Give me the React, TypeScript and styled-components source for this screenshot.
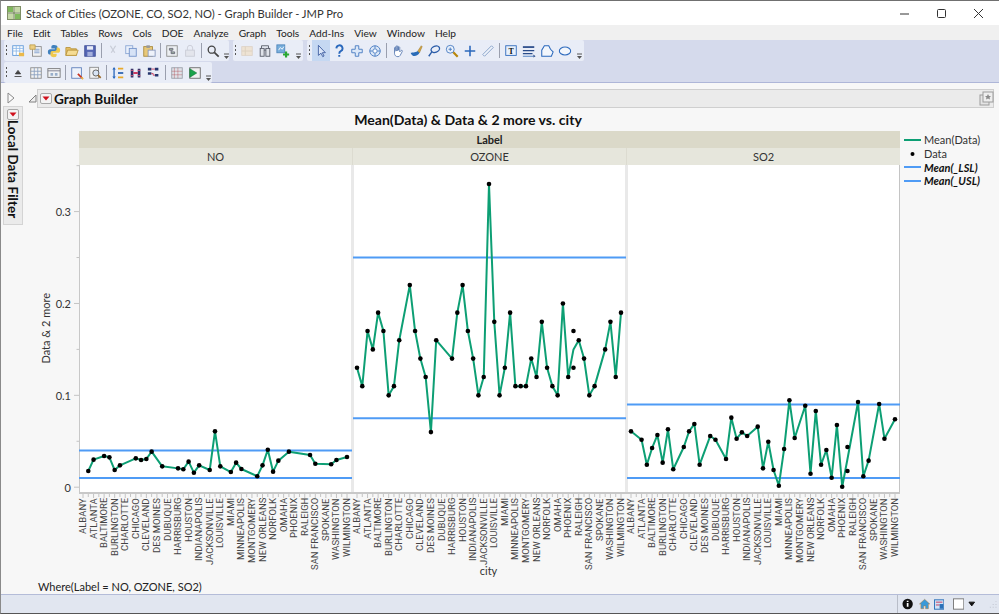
import React from 'react';
import styled, { createGlobalStyle } from 'styled-components';

const FONT = `Lato, 'Open Sans', sans-serif`;

const GlobalStyle = createGlobalStyle`
  html, body { margin: 0; padding: 0; background: #f7f7f7; overflow: hidden; }
  * { box-sizing: border-box; }
`;

const CITIES = ['ALBANY', 'ATLANTA', 'BALTIMORE', 'BURLINGTON', 'CHARLOTTE', 'CHICAGO', 'CLEVELAND', 'DES MOINES', 'DUBUQUE', 'HARRISBURG', 'HOUSTON', 'INDIANAPOLIS', 'JACKSONVILLE', 'LOUISVILLE', 'MIAMI', 'MINNEAPOLIS', 'MONTGOMERY', 'NEW ORLEANS', 'NORFOLK', 'OMAHA', 'PHOENIX', 'RALEIGH', 'SAN FRANCISCO', 'SPOKANE', 'WASHINGTON', 'WILMINGTON'];

type Val = number | number[] | null;
const _ = null;

const NO_DATA: Val[] = [_, .0176, .03, _, .034, .0325, .0187, .0238, _, _, .0314, .0296, .0307, .0387, _, .0227, _, _, .0205, .0195, .0278, .0158, .0238, _, .0187, .0608, .0227, _, .0165, .0267, .0198, _, _, .0119, .0238, .0408, .0169, .0289, _, .0387, _, _, _, .035, .0256, _, _, .0249, .0296, _, .0329];
const OZONE_DATA: Val[] = [.13, .11, .17, .15, .19, .17, .1, .11, .16, _, .22, .17, .14, .12, .06, .16, _, _, .14, .19, .22, .17, .14, .1, .12, .33, .18, .1, .13, .19, .11, .11, .11, .14, .12, .18, .13, .11, .1, .2, .12, [.17, .13], .16, .14, .1, .11, _, .15, .18, .12, .19];
const SO2_DATA: Val[] = [.0608, _, .0517, .0245, .0427, .0568, .0267, .063, .0195, _, .0438, .0608, .0688, .0245, _, .0557, .0517, _, .0307, .0757, .0528, .0597, .0557, _, .0659, .0205, .0495, .0187, .0016, .0416, .0946, .0536, _, .0887, .0147, .083, .0245, .0405, .0103, .0677, .0005, [.0176, .0438], _, .0927, .0119, .0289, _, .0906, .0528, _, .0739];

const PANELS = [
  { name: 'NO', data: NO_DATA, limits: [0.01, 0.04] },
  { name: 'OZONE', data: OZONE_DATA, limits: [0.075, 0.25] },
  { name: 'SO2', data: SO2_DATA, limits: [0.01, 0.09] },
];

const PLOT_W = 271;
const PLOT_H = 327;
const PITCH = 5.28;
const xAt = (i: number) => 3 + PITCH * i;
const yAt = (v: number) => 322.2 - 918.7 * v;

/* ---------- window chrome ---------- */

const Window = styled.div`
  width: 999px;
  height: 614px;
  display: flex;
  flex-direction: column;
  border-top: 1px solid #707070;
  border-left: 1px solid #8a8a8a;
  border-bottom: 1px solid #555;
  background: #f7f7f7;
  font-family: ${FONT};
  color: #222;
`;

const TitleBar = styled.div`
  height: 24px;
  flex: none;
  display: flex;
  align-items: center;
  padding-left: 6px;
  background: #fff;
`;

const TitleText = styled.span`
  margin-left: 5px;
  font-size: 11.2px;
  color: #333;
  flex: 1;
`;

const WinButtons = styled.div`
  display: flex;
  align-items: center;
  gap: 26px;
  padding-right: 15px;
`;

const MenuBar = styled.div`
  height: 15px;
  flex: none;
  display: flex;
  align-items: center;
  gap: 10px;
  padding-left: 6px;
  background: #f0f0f0;
  font-size: 10.2px;
  color: #222;
`;

const ToolArea = styled.div`
  height: 43px;
  flex: none;
  background: #d5daec;
  border-bottom: 1px solid #aeb6d8;
  display: flex;
  flex-direction: column;
  gap: 1px;
  padding: 0 0 0 3px;
`;

const ToolRow = styled.div`
  display: flex;
  gap: 4px;
  height: 21px;
`;

const ToolPill = styled.div<{ $width: number }>`
  width: ${p => p.$width}px;
  display: flex;
  align-items: center;
  height: 21px;
  background: #e9edf7;
  border-radius: 2px;
`;

const Grip = styled.div`
  width: 5px;
  height: 11px;
  flex: none;
  background: radial-gradient(circle at 2.5px 1px, #555 .9px, transparent 1px) 0 0 / 5px 4px;
`;

const ToolBtn = styled.div<{ $active?: boolean }>`
  width: 18px;
  height: 21px;
  flex: none;
  display: flex;
  align-items: center;
  justify-content: center;
  background: ${p => (p.$active ? '#c5d8f2' : 'transparent')};
`;

const ToolSep = styled.div`
  width: 1px;
  height: 15px;
  margin: 0 2px;
  flex: none;
  background: #9a9fae;
`;

const Chevron = styled.div`
  width: 8px;
  height: 20px;
  margin-left: auto;
  margin-right: 1px;
  flex: none;
  display: flex;
  align-items: flex-end;
  justify-content: center;
  padding-bottom: 1px;
`;

/* ---------- report body ---------- */

const Body = styled.div`
  flex: 1;
  display: flex;
  min-height: 0;
  border-bottom: 1px solid #b4bcd8;
`;

const Rail = styled.div`
  width: 27px;
  flex: none;
  display: flex;
  flex-direction: column;
  align-items: flex-start;
  padding: 9px 0 0 2px;
`;

const FilterTab = styled.div`
  margin-top: 2px;
  width: 20px;
  height: 119px;
  display: flex;
  flex-direction: column;
  align-items: center;
  gap: 0;
  padding-top: 2px;
  background: #ebebeb;
  border: 1px solid #d4d4d4;
`;

const FilterLabel = styled.span`
  writing-mode: vertical-rl;
  font-size: 13.3px;
  font-weight: 700;
  letter-spacing: 0.1px;
  color: #111;
`;

const Main = styled.div`
  flex: 1;
  display: flex;
  flex-direction: column;
  padding-top: 6px;
  min-width: 0;
`;

const OutlineRow = styled.div`
  display: flex;
  align-items: center;
  gap: 0;
  height: 19px;
  padding-right: 5px;
`;

const OutlineBar = styled.div`
  flex: 1;
  height: 19px;
  display: flex;
  align-items: center;
  gap: 2px;
  padding: 0 0 0 2px;
  background: #ebebeb;
  border: 1px solid #cfcfcf;
`;

const OutlineTitle = styled.span`
  flex: 1;
  font-size: 13.6px;
  font-weight: 700;
  color: #111;
`;

const ChartTitle = styled.div`
  height: 23px;
  width: 880px;
  text-align: center;
  font-size: 14.1px;
  font-weight: 700;
  line-height: 24px;
  color: #111;
`;

const ChartGrid = styled.div`
  display: grid;
  grid-template-columns: 24px 27px 821px 1fr;
  grid-template-rows: 17px 17px ${PLOT_H}px 6px 64px;
`;

const YTitle = styled.div`
  grid-column: 1;
  grid-row: 3;
  display: flex;
  align-items: center;
  justify-content: center;
  padding-left: 12px;
`;

const YTitleText = styled.span`
  writing-mode: vertical-rl;
  transform: rotate(180deg);
  font-size: 11px;
  white-space: nowrap;
  color: #333;
  margin-left: -1px;
`;

const YAxis = styled.svg`
  grid-column: 2;
  grid-row: 3;
  display: block;
  overflow: visible;
`;

const GroupStrip = styled.div`
  grid-column: 3;
  grid-row: 1;
  background: #dbd9c9;
  text-align: center;
  font-size: 11px;
  font-weight: 700;
  line-height: 17px;
  color: #222;
`;

const StripRow = styled.div`
  grid-column: 3;
  grid-row: 2;
  display: flex;
  gap: 1px;
  background: #dcdbd0;
`;

const Strip = styled.div`
  flex: 1;
  background: #e6e6dc;
  text-align: center;
  font-size: 11px;
  line-height: 17px;
  color: #333;
`;

const PlotRow = styled.div`
  grid-column: 3;
  grid-row: 3;
  display: flex;
  justify-content: space-between;
  background: #e9e9e9;
  border-left: 1px solid #c8c8c8;
  border-right: 1px solid #c4c4c4;
`;

const Plot = styled.svg`
  display: block;
  background: #fff;
  overflow: visible;
`;

const TickRow = styled.div`
  grid-column: 3;
  grid-row: 4;
  display: flex;
  justify-content: space-between;
  padding: 0 1px;
  border-top: 2px solid #c8c8c8;
`;

const LabelRow = styled.div`
  grid-column: 3;
  grid-row: 5;
  display: flex;
  justify-content: space-between;
  padding: 0 1px;
`;

const LabelPanel = styled.div`
  width: ${PLOT_W}px;
  display: flex;
`;

const CityLabel = styled.span`
  width: ${PITCH * 2}px;
  height: 64px;
  flex: none;
  writing-mode: vertical-rl;
  transform: rotate(180deg);
  display: flex;
  align-items: center;
  justify-content: flex-end;
  position: relative;
  left: -2.8px;
  font-family: Roboto, ${FONT};
  font-size: 9.5px;
  white-space: nowrap;
  color: #444;
`;

const Legend = styled.div`
  grid-column: 4;
  grid-row: 1 / 4;
  padding: 2px 0 0 4px;
  display: flex;
  flex-direction: column;
`;

const LegendRow = styled.div`
  height: 13.7px;
  display: flex;
  align-items: center;
  gap: 3px;
`;

const LegendText = styled.span<{ $limit?: boolean }>`
  font-size: 11px;
  color: ${p => (p.$limit ? '#111' : '#333')};
  font-weight: ${p => (p.$limit ? 700 : 400)};
  font-style: ${p => (p.$limit ? 'italic' : 'normal')};
`;

const XTitle = styled.div`
  height: 19px;
  margin-left: 50px;
  width: 821px;
  text-align: center;
  font-size: 11px;
  line-height: 18px;
  color: #333;
`;

const WhereLine = styled.div`
  height: 14px;
  padding-left: 10px;
  font-size: 11px;
  line-height: 13px;
  color: #222;
`;

const StatusBar = styled.div`
  height: 18px;
  flex: none;
  display: flex;
  justify-content: flex-end;
  align-items: center;
  background: #e1e6f0;
  padding-right: 2px;
`;

const StatusTools = styled.div`
  height: 18px;
  width: 100px;
  display: flex;
  align-items: center;
  gap: 3px;
  padding-left: 4px;
  border-left: 1px solid #b8bdc8;
`;

/* ---------- small drawings ---------- */

const Ico = ({ children, size = 14 }: { children: React.ReactNode; size?: number }) => (
  <svg width={size} height={size} viewBox="0 0 16 16">{children}</svg>
);

const RedMenu = () => (
  <svg width="12" height="11" viewBox="0 0 12 11" style={{ flex: 'none' }}>
    <rect x="0.5" y="0.5" width="11" height="10" rx="1.5" fill="#f4f4f4" stroke="#a8a8a8" />
    <path d="M2.5 3.5h7L6 7.5z" fill="#d0101c" />
  </svg>
);

const ICONS: Record<string, React.ReactNode> = {
  newTable: <><rect x="2" y="2" width="12" height="11" fill="#fff" stroke="#5a96d8" /><path d="M2 5h12M2 8h12M6 2v11M10 2v11" stroke="#8db8e8" /><path d="M9 10h6v4H9z" fill="#eab84a" /></>,
  script: <><rect x="4" y="3" width="10" height="11" fill="#f2f2f2" stroke="#8a8a8a" /><path d="M6 6h6M6 8h6M6 10h6" stroke="#7a9ccf" /><path d="M1 1h6v5H1z" fill="#ecce82" stroke="#c0a050" /></>,
  python: <><path d="M8 1C5 1 5 2.500 5 4v1h4v1H3.500C2 6 1 7 1 9s1 3 2.500 3H5v-2c0-1 1-2 2-2h3c1 0 2-.8 2-2V3.500C12 2 10.500 1 8 1z" fill="#3f80bd" /><path d="M8 15c3 0 3-1.500 3-3v-1H7v-1h5.500C14 10 15 9 15 7s-1-3-2.500-3H11v2c0 1-1 2-2 2H6c-1 0-2 .8-2 2v2.500C4 14 5.500 15 8 15z" fill="#f0c94c" /></>,
  folder: <><path d="M1 4h5l1 1.500h6V13H1z" fill="#e4be64" stroke="#b8953f" /><path d="M3 7h12l-2 6H1z" fill="#f5dc94" stroke="#b8953f" /></>,
  save: <><rect x="2" y="2" width="12" height="12" fill="#5566b4" stroke="#3d4c96" /><rect x="4.500" y="2.500" width="7" height="4" fill="#e8ecf8" /><rect x="5" y="9" width="6" height="5" fill="#a4afdc" /></>,
  cut: <path d="M5 2l5 8M11 2L6 10" stroke="#c9cdd8" strokeWidth="1.500" fill="none" />,
  copy: <><rect x="2" y="2" width="8" height="9" fill="#eaf0fb" stroke="#8aa6d4" /><rect x="6" y="5" width="8" height="9" fill="#d6e2f6" stroke="#7090c8" /></>,
  paste: <><rect x="2" y="3" width="10" height="11" fill="#e8c878" stroke="#a88a3e" /><rect x="5" y="1.500" width="4" height="3" fill="#999" /><rect x="7" y="7" width="8" height="7" fill="#eef2fa" stroke="#8596bc" /></>,
  jrn: <><rect x="2" y="2" width="12" height="12" fill="#eceff2" stroke="#8a8a8a" /><path d="M5 5h4v2H5zM7 9h4v2H7zM7 7v2" fill="#a8c0a8" stroke="#667" /></>,
  lock: <><rect x="3" y="7" width="10" height="7" fill="#e3e5ec" stroke="#c9ccd6" /><path d="M5 7V4.500a3 3 0 0 1 6 0V7" fill="none" stroke="#c9ccd6" /></>,
  search: <><circle cx="6.500" cy="6.500" r="4" fill="none" stroke="#444" strokeWidth="1.500" /><path d="M9.500 9.500l5 5" stroke="#444" strokeWidth="2" /></>,
  faded: <><rect x="2" y="3" width="12" height="10" fill="#eee3d4" stroke="#ddd3c8" /><path d="M6 3v10M2 8h12" stroke="#dccfbe" /></>,
  binoculars: <><rect x="2.500" y="5" width="4.500" height="9" fill="#dfe3ea" stroke="#555a66" /><rect x="9" y="5" width="4.500" height="9" fill="#dfe3ea" stroke="#555a66" /><path d="M4 5V2h8v3M7 7h2" stroke="#555a66" fill="none" /></>,
  add: <><rect x="1" y="1" width="9" height="9" fill="#78aedc" stroke="#4f86bc" /><path d="M3 7l2-3 2 2 2-3" stroke="#fff" fill="none" /><path d="M8 12h7M11.500 8.500v7" stroke="#2aa834" strokeWidth="2.500" /></>,
  arrow: <path d="M5 1.500v11.500l3-2.500 2 4 1.500-.8-2-3.800h3.500z" fill="#dbe6f8" stroke="#3a5a9e" />,
  help: <path d="M5 5a3.500 3.500 0 1 1 5 3.200c-1.200.6-1.700 1.300-1.700 2.800M8.300 12.500v2" fill="none" stroke="#2a68bc" strokeWidth="2.200" />,
  cross: <path d="M6 2h4v4h4v4h-4v4H6v-4H2V6h4z" fill="#dce8f8" stroke="#4478c0" />,
  target: <><circle cx="8" cy="8" r="6" fill="#dce8f8" stroke="#4478c0" /><circle cx="8" cy="8" r="2.500" fill="#fff" stroke="#4478c0" /><path d="M8 2v3M8 11v3M2 8h3M11 8h3" stroke="#4478c0" /></>,
  hand: <path d="M4 8V4.500c0-1 1.500-1 1.500 0V7M5.500 7V3c0-1 1.500-1 1.500 0v4M7 7V3c0-1 1.500-1 1.500 0v4M8.500 7V4c0-1 1.500-1 1.500 0v5l1.500-1.500c1-.8 2 .2 1.300 1.200L10.500 13c-.5 1-1.500 1.500-2.500 1.500-2.500 0-4-1.500-4-4V8z" fill="#fff" stroke="#5a7cb2" />,
  brush: <><path d="M2 10c2 0 7-1 8-2l2 2c-1 3-6 5-8 3-1-.8-2-2-2-3z" fill="#2a6cb8" /><path d="M10 8l4-6 1 1-3 7z" fill="#d8a640" stroke="#8a6a1e" strokeWidth=".5" /></>,
  lasso: <><ellipse cx="9.500" cy="6" rx="5" ry="3.500" transform="rotate(-20 9.500 6)" fill="none" stroke="#2a5ca8" strokeWidth="1.500" /><path d="M5.500 9L2 14" stroke="#2a5ca8" strokeWidth="1.500" /></>,
  zoom: <><circle cx="6" cy="6" r="4.500" fill="#eaf1fb" stroke="#4478c0" /><path d="M4 6h4M6 4v4" stroke="#4478c0" /><path d="M9.500 9.500l5 5" stroke="#b8860b" strokeWidth="2.500" /></>,
  plus: <path d="M8 2v12M2 8h12" stroke="#2a68bc" strokeWidth="1.800" />,
  ruler: <path d="M2 12L12 2l2 2L4 14z" fill="#eef3fb" stroke="#7e9ac4" />,
  textBox: <><rect x="2" y="2" width="12" height="11" fill="#e8f0fb" stroke="#2a68bc" /><text x="8" y="11" textAnchor="middle" fontSize="9" fontWeight="700" fontFamily="'Liberation Serif', serif" fill="#111">T</text></>,
  lines: <><path d="M1 3.500h13" stroke="#2a4c8a" strokeWidth="2" /><path d="M1 7.500h13M1 11h11" stroke="#2a4c8a" strokeWidth="1.400" /><path d="M1 14h12" stroke="#4478c0" /><path d="M13 12l2.500 2-2.500 1.500z" fill="#2a4c8a" /></>,
  polygon: <path d="M2 14V7l3-5h5l2 4 3 3-2 5z" fill="#f2f6fc" stroke="#2a68bc" strokeWidth="1.200" />,
  ellipse: <ellipse cx="8" cy="8" rx="6.500" ry="4.500" fill="#f2f6fc" stroke="#2a68bc" strokeWidth="1.200" />,
  triangle: <path d="M8 5l3 4H5zM4 12h8" fill="#444" stroke="#444" />,
  grid: <><rect x="2" y="2" width="12" height="12" fill="#f2f2f2" stroke="#8a8a8a" /><path d="M6 2v12M10 2v12M2 6h12M2 10h12" stroke="#8aa0c0" /></>,
  table: <><rect x="1" y="3" width="14" height="10" fill="#f0f2f4" stroke="#777" /><path d="M1 5.500h14" stroke="#778" /><path d="M4 8h3v3H4zM9 8h3v3H9z" fill="#98aeca" /></>,
  edit: <><rect x="2" y="2" width="11" height="12" fill="#eef3fb" stroke="#5a7cb8" /><path d="M9 9l5 5" stroke="#c8321e" strokeWidth="2" /><path d="M13 13l2 2" stroke="#e8b44a" strokeWidth="2" /></>,
  scan: <><rect x="2" y="1.500" width="10" height="12.500" fill="#f2f2f2" stroke="#8a8a8a" /><circle cx="9" cy="8" r="3.500" fill="#d8e4f4" stroke="#555" /><path d="M11.500 10.500l3 3" stroke="#9a6a2a" strokeWidth="2" /></>,
  sortCols: <><path d="M3.500 2v12" stroke="#2a68bc" strokeWidth="1.500" /><path d="M1.500 4l2-2.500 2 2.500M1.500 12l2 2.500 2-2.500" fill="#2a68bc" /><path d="M8 2h6v2H8z" fill="#e8a92a" /><path d="M8 7h6v2H8z" fill="#2a62b0" /><path d="M8 12h6v2H8z" fill="#e8a92a" /></>,
  joinCols: <><path d="M2 3h3v10H2zM10 3h3v10h-3z" fill="#2b2f66" /><path d="M5 8h5" stroke="#c81e4a" strokeWidth="2" /><path d="M2 5h3M10 5h3M2 11h3M10 11h3" stroke="#e05a7a" /></>,
  tree: <><path d="M1 2h4v3H1zM1 7h4v3H1zM9 2h4v3H9zM9 9h4v3H9z" fill="#26366e" /><path d="M5 3.500h4M5 8.500h2v2h2" stroke="#c83a5a" fill="none" /></>,
  calc: <><rect x="2" y="2" width="12" height="12" fill="#dfe2e8" stroke="#9a9ea8" /><path d="M5 2v12M9 2v12M2 6h12M2 10h12" stroke="#a6343a" strokeOpacity=".4" /></>,
  run: <><rect x="2" y="2" width="12" height="12" fill="#f0f0f0" stroke="#666" /><path d="M2 3l8 5-8 5z" fill="#1aa34a" stroke="#0e6c30" strokeWidth=".6" /></>,
};

const Tool = ({ name, active }: { name: string; active?: boolean }) => (
  <ToolBtn $active={active}><Ico>{ICONS[name]}</Ico></ToolBtn>
);

const More = () => (
  <Chevron>
    <svg width="7" height="7" viewBox="0 0 7 7">
      <path d="M1 1h5" stroke="#555" />
      <path d="M1 3h5L3.500 6z" fill="#555" />
    </svg>
  </Chevron>
);

const Toolbar = ({ items, width }: { items: string[]; width: number }) => (
  <ToolPill $width={width}>
    <Grip />
    {items.map((it, i) =>
      it === '|' ? <ToolSep key={i} /> : <Tool key={i} name={it.replace('*', '')} active={it.startsWith('*')} />
    )}
    <More />
  </ToolPill>
);

const AppIcon = () => (
  <svg width="14" height="14" viewBox="0 0 14 14">
    <rect x="0.500" y="0.500" width="13" height="13" fill="#e8eed8" stroke="#7f8f65" />
    <path d="M1 1h5v5H1z" fill="#7fb85c" />
    <path d="M8 8h5v5H8z" fill="#7fb85c" />
    <path d="M8 1h5v5H8zM1 8h5v5H1z" fill="#c6d8a8" />
    <path d="M7 1v12M1 7h12" stroke="#6a7a54" />
  </svg>
);

/* ---------- chart ---------- */

const PanelPlot = ({ data, limits }: { data: Val[]; limits: number[] }) => {
  const mean: string[] = [];
  const dots: [number, number][] = [];
  data.forEach((v, i) => {
    if (v === null) return;
    const all = Array.isArray(v) ? v : [v];
    all.forEach(a => dots.push([xAt(i), yAt(a)]));
    const m = all.reduce((s, a) => s + a, 0) / all.length;
    mean.push(`${xAt(i).toFixed(2)},${yAt(m).toFixed(2)}`);
  });
  return (
    <Plot width={PLOT_W} height={PLOT_H} viewBox={`0 0 ${PLOT_W} ${PLOT_H}`}>
      {limits.map(l => (
        <line key={l} x1={-1} x2={PLOT_W + 1} y1={yAt(l)} y2={yAt(l)} stroke="#4f9bf5" strokeWidth="2" />
      ))}
      <polyline points={mean.join(' ')} fill="none" stroke="#0d9f74" strokeWidth="2" strokeLinejoin="round" />
      {dots.map(([x, y], i) => <circle key={i} cx={x} cy={y} r="2.300" fill="#000" />)}
    </Plot>
  );
};

const XTicks = () => (
  <svg width={PLOT_W} height="4" viewBox={`0 0 ${PLOT_W} 4`} style={{ display: 'block' }}>
    {Array.from({ length: 51 }, (_v, i) => (
      <line key={i} x1={xAt(i)} x2={xAt(i)} y1="0" y2={i % 2 ? 3 : 4} stroke="#c4c4c4" />
    ))}
  </svg>
);

const YTicks = () => (
  <YAxis width="27" height={PLOT_H} viewBox={`0 0 27 ${PLOT_H}`}>
    {[0, .05, .1, .15, .2, .25, .3, .35].map((v, i) => (
      <line key={v} x1={i % 2 ? 24.500 : 22} x2="27" y1={yAt(v)} y2={yAt(v)} stroke="#c4c4c4" />
    ))}
    {[0, .1, .2, .3].map(v => (
      <text key={v} x="19" y={yAt(v) + 4.600} textAnchor="end" fontSize="11" fontFamily={FONT} fill="#333">
        {v === 0 ? '0' : v.toFixed(1)}
      </text>
    ))}
  </YAxis>
);

const LineKey = ({ color }: { color: string }) => (
  <svg width="17" height="4" viewBox="0 0 17 4"><path d="M0 2h17" stroke={color} strokeWidth="2" /></svg>
);

const DotKey = () => (
  <svg width="17" height="6" viewBox="0 0 17 6"><circle cx="8.500" cy="3" r="2" fill="#000" /></svg>
);

export default function App() {
  return (
    <>
      <GlobalStyle />
      <Window>
        <TitleBar>
          <AppIcon />
          <TitleText>Stack of Cities (OZONE, CO, SO2, NO) - Graph Builder - JMP Pro</TitleText>
          <WinButtons>
            <svg width="11" height="11" viewBox="0 0 11 11"><path d="M1 6h9" stroke="#333" /></svg>
            <svg width="11" height="11" viewBox="0 0 11 11"><rect x="1.500" y="1.500" width="8" height="8" rx="1" fill="none" stroke="#333" /></svg>
            <svg width="11" height="11" viewBox="0 0 11 11"><path d="M1 1l9 9M10 1l-9 9" stroke="#333" /></svg>
          </WinButtons>
        </TitleBar>
        <MenuBar>
          {['File', 'Edit', 'Tables', 'Rows', 'Cols', 'DOE', 'Analyze', 'Graph', 'Tools', 'Add-Ins', 'View', 'Window', 'Help'].map(m => (
            <span key={m}>{m}</span>
          ))}
        </MenuBar>
        <ToolArea>
          <ToolRow>
            <Toolbar width={225} items={['newTable', 'script', 'python', 'folder', 'save', '|', 'cut', 'copy', 'paste', '|', 'jrn', 'lock', '|', 'search']} />
            <Toolbar width={70} items={['faded', 'binoculars', 'add']} />
            <Toolbar width={277} items={['*arrow', 'help', 'cross', 'target', '|', 'hand', 'brush', 'lasso', 'zoom', 'plus', 'ruler', '|', 'textBox', 'lines', 'polygon', 'ellipse']} />
          </ToolRow>
          <ToolRow>
            <Toolbar width={208} items={['triangle', 'grid', 'table', '|', 'edit', 'scan', '|', 'sortCols', 'joinCols', 'tree', '|', 'calc', 'run']} />
          </ToolRow>
        </ToolArea>
        <Body>
          <Rail>
            <svg width="14" height="12" viewBox="0 0 14 12" style={{ marginLeft: 2 }}>
              <path d="M3 1l6 5-6 5z" fill="#fafafa" stroke="#8a8a8a" />
            </svg>
            <FilterTab>
              <RedMenu />
              <FilterLabel>Local Data Filter</FilterLabel>
            </FilterTab>
          </Rail>
          <Main>
            <OutlineRow>
              <svg width="9" height="9" viewBox="0 0 9 9" style={{ flex: 'none' }}>
                <path d="M8 1v7H1z" fill="#efefef" stroke="#808080" />
              </svg>
              <OutlineBar>
                <RedMenu />
                <OutlineTitle>Graph Builder</OutlineTitle>
                <svg width="15" height="15" viewBox="0 0 15 15" style={{ marginRight: -1 }}>
                  <rect x="1" y="4" width="9" height="10" fill="#e4e4e4" stroke="#9c9c9c" />
                  <rect x="4" y="1" width="10" height="10" fill="#eee" stroke="#9c9c9c" />
                  <path d="M9 3l1 2h2l-1.500 1.500.5 2-2-1-2 1 .5-2L6 5h2z" fill="#8a8a8a" />
                </svg>
              </OutlineBar>
            </OutlineRow>
            <ChartTitle>Mean(Data) &amp; Data &amp; 2 more vs. city</ChartTitle>
            <ChartGrid>
              <GroupStrip>Label</GroupStrip>
              <StripRow>
                {PANELS.map(p => <Strip key={p.name}>{p.name}</Strip>)}
              </StripRow>
              <YTitle><YTitleText>Data &amp; 2 more</YTitleText></YTitle>
              <YTicks />
              <PlotRow>
                {PANELS.map(p => <PanelPlot key={p.name} data={p.data} limits={p.limits} />)}
              </PlotRow>
              <TickRow>
                {PANELS.map(p => <XTicks key={p.name} />)}
              </TickRow>
              <LabelRow>
                {PANELS.map(p => (
                  <LabelPanel key={p.name}>
                    {CITIES.map(c => <CityLabel key={c}>{c}</CityLabel>)}
                  </LabelPanel>
                ))}
              </LabelRow>
              <Legend>
                <LegendRow><LineKey color="#0d9f74" /><LegendText>Mean(Data)</LegendText></LegendRow>
                <LegendRow><DotKey /><LegendText>Data</LegendText></LegendRow>
                <LegendRow><LineKey color="#4f9bf5" /><LegendText $limit>Mean(_LSL)</LegendText></LegendRow>
                <LegendRow><LineKey color="#4f9bf5" /><LegendText $limit>Mean(_USL)</LegendText></LegendRow>
              </Legend>
            </ChartGrid>
            <XTitle>city</XTitle>
            <WhereLine>Where(Label = NO, OZONE, SO2)</WhereLine>
          </Main>
        </Body>
        <StatusBar>
          <StatusTools>
            <svg width="12" height="12" viewBox="0 0 12 12">
              <circle cx="6" cy="6" r="5.500" fill="#111" />
              <path d="M6 5v4M6 2.500v1.500" stroke="#fff" strokeWidth="1.800" />
            </svg>
            <svg width="12" height="12" viewBox="0 0 12 12" style={{ marginLeft: 3 }}>
              <path d="M6 1L0.500 6H2v5h3V8h2v3h3V6h1.500z" fill="#3a9ad8" stroke="#c07a2a" strokeWidth=".5" />
            </svg>
            <svg width="11" height="11" viewBox="0 0 11 11">
              <rect x="0.500" y="0.500" width="10" height="10" fill="#cfe2f6" stroke="#2a70b8" />
              <path d="M2 3h7M2 6h4" stroke="#c83a5a" />
              <path d="M6 5h4v5H6z" fill="#2a70b8" />
            </svg>
            <svg width="12" height="12" viewBox="0 0 12 12" style={{ marginLeft: 6 }}>
              <rect x="0.500" y="0.500" width="11" height="11" fill="#fff" stroke="#777" />
            </svg>
            <svg width="8" height="6" viewBox="0 0 8 6" style={{ marginLeft: 1 }}>
              <path d="M1 1h6L4 5z" fill="#111" stroke="#111" />
            </svg>
            <svg width="10" height="10" viewBox="0 0 10 10" style={{ marginLeft: 9 }}>
              <path d="M8 2h1v1H8zM5 5h1v1H5zM8 5h1v1H8zM2 8h1v1H2zM5 8h1v1H5zM8 8h1v1H8z" fill="#bfc4ce" />
            </svg>
          </StatusTools>
        </StatusBar>
      </Window>
    </>
  );
}
